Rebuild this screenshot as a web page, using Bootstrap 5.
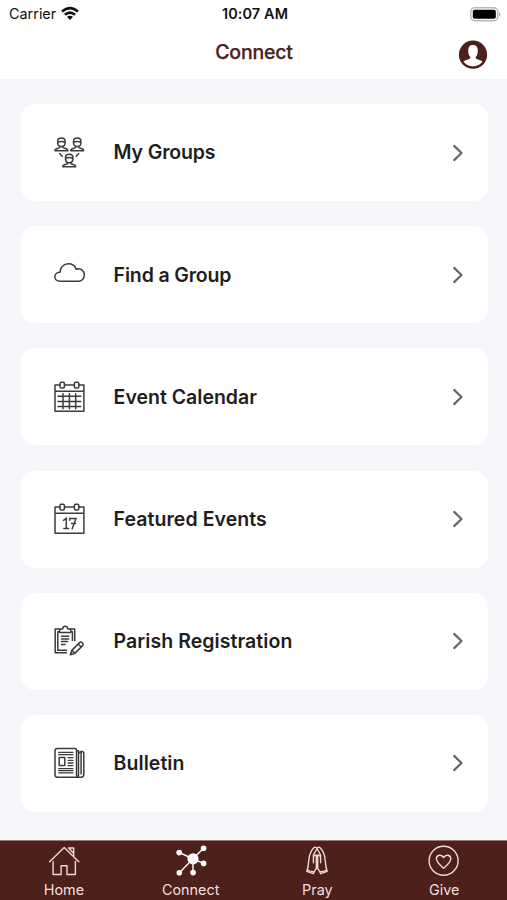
<!DOCTYPE html>
<html lang="en">
<head>
<meta charset="utf-8">
<meta name="viewport" content="width=device-width, initial-scale=1">
<title>Connect</title>
<link href="https://cdn.jsdelivr.net/npm/bootstrap@5.3.0/dist/css/bootstrap.min.css" rel="stylesheet">
<style>
body{font-family:Inter,"Liberation Sans",sans-serif;background:#f4f6fa;color:#1e1e20;height:100vh}
svg{display:block;flex:none;fill:none;stroke-linecap:round;stroke-linejoin:round}
.top-area{height:79px}
.status-row{height:28px;font-size:14.4px;padding:0 6px 0 9px;color:#111}
.status-row>div{flex:1 1 0}
.status-time{font-weight:600;font-size:14.4px;letter-spacing:.13px}
.title-row{height:51px;padding:0 19px 0 20px}
.page-title{font-size:19.5px;font-weight:500;letter-spacing:-.2px;color:#4b201d;line-height:24px;padding-bottom:3px;-webkit-text-stroke:.25px #4b201d}
.menu-list{padding:25px 19px 0 21px;gap:25.2px}
.menu-card{height:97px;border:0;border-radius:14px;padding:0 24px 0 23px;color:inherit}
.menu-card svg{stroke:#3c3c3c;stroke-width:1.5}
.menu-label{font-size:19.5px;font-weight:600;margin-left:19.6px;padding-top:1px}
.label-snug{letter-spacing:-.15px}
.label-wide{letter-spacing:.06px}
.menu-card .chevron{stroke:#666;stroke-width:2.2}
.tab-row{height:60px;background:#4d201c;border-top:1px solid #957d76}
.tab-row a{color:#f3dfda;font-size:14.4px;line-height:18px;padding:2px 0 0 1px}
.tab-row span{padding-top:1px}
.tab-row svg{stroke:#f0d9d3;stroke-width:1.4}
</style>
</head>
<body class="d-flex flex-column overflow-hidden">
<header class="top-area bg-white">
  <div class="status-row d-flex align-items-center">
    <div class="d-flex align-items-center gap-1"><span>Carrier</span>
      <svg width="20" height="16" viewBox="0 0 20 16" stroke="#111" stroke-width="2.7"><path d="M2 5.6Q10-1.4 18 5.6M4.9 8.8Q10 4.4 15.1 8.8" stroke-linecap="butt"/><path d="M7 10.8Q10 8.5 13 10.8L10 14z" fill="#111" stroke="none"/></svg>
    </div>
    <span class="status-time">10:07 AM</span>
    <div class="d-flex justify-content-end">
      <svg width="31" height="15" viewBox="0 0 31 15"><rect x=".8" y=".8" width="27" height="13" rx="4" fill="#fff" stroke="#b7b7b7" stroke-width="1.4"/><rect x="2.8" y="2.8" width="23" height="9" rx="1.8" fill="#000"/><path d="M29 5q3 2.4 0 4.8z" fill="#aaa"/></svg>
    </div>
  </div>
  <div class="title-row d-flex align-items-center justify-content-between">
    <span style="width:30px"></span>
    <h1 class="page-title m-0">Connect</h1>
    <svg width="30" height="30" viewBox="0 0 30 30"><circle cx="15" cy="15.7" r="14.1" fill="#4d201c"/><path d="M5.5 22.8C7 20.7 12.3 20.8 12.5 18.5C10.6 16 10.2 14.5 10.2 11.3C10.2 7.8 12 6 15 6S19.8 7.8 19.8 11.3C19.8 14.5 19.4 16 17.5 18.5C17.7 20.8 23 20.7 24.5 22.8Q20.5 27.4 15 27.4T5.5 22.8" fill="#fff"/></svg>
  </div>
</header>

<main class="menu-list d-flex flex-column flex-grow-1">
  <a href="#" class="menu-card card flex-row align-items-center text-decoration-none">
    <svg width="50" height="50" viewBox="0 0 50 50">
      <defs><g id="member"><path d="M-3.7-9.2C-3.7-13.8 3.7-13.8 3.7-9.2V-7.4C3.3-3 -3.3-3-3.7-7.4zM-3.7-8.3Q0-10.3 3.7-8.3M-1.6-4.6V-3.2C-2-2.3-6.5-2.6-6.5 0H6.5C6.5-2.6 2-2.3 1.6-3.2V-4.6"/></g></defs>
      <use href="#member" x="17.4" y="22.7"/><use href="#member" x="33.2" y="22.7"/><use href="#member" x="25.2" y="38.8"/>
      <path d="M15.7 25.5l2.6 2.7M34.8 25.5l-2.6 2.7"/>
    </svg>
    <span class="menu-label label-snug">My Groups</span><svg class="chevron ms-auto" width="12" height="18" viewBox="0 0 12 18"><path d="M2.2 1.9L9.5 9 2.2 16.1"/></svg>
  </a>
  <a href="#" class="menu-card card flex-row align-items-center text-decoration-none">
    <svg width="50" height="50" viewBox="0 0 50 50"><path d="M16 31.3C13 31.3 10.8 29.3 10.8 26.8C10.8 24.1 13 22.2 16.1 22.2C16.2 17.5 19.5 13.8 24.3 13.8C28.7 13.8 31.2 16.3 32.2 19.2C36.6 17.7 40.3 20.8 40.3 24.8C40.3 28.5 37.6 31.3 34.4 31.3z"/></svg>
    <span class="menu-label label-snug">Find a Group</span><svg class="chevron ms-auto" width="12" height="18" viewBox="0 0 12 18"><path d="M2.2 1.9L9.5 9 2.2 16.1"/></svg>
  </a>
  <a href="#" class="menu-card card flex-row align-items-center text-decoration-none">
    <svg width="50" height="50" viewBox="0 0 50 50"><path d="M16 13H11V39.2H39.9V13H35M20.5 13h9.8M11 19.3H39.9"/><rect x="16" y="10.3" width="4.4" height="5.6" rx="1.2"/><rect x="30.4" y="10.3" width="4.4" height="5.6" rx="1.2"/><path d="M14 24.2H36.8M14 29.5H36.8M14 34.5H36.8M19 21.7V36.7M25.4 21.7V36.7M31.7 21.7V36.7"/></svg>
    <span class="menu-label">Event Calendar</span><svg class="chevron ms-auto" width="12" height="18" viewBox="0 0 12 18"><path d="M2.2 1.9L9.5 9 2.2 16.1"/></svg>
  </a>
  <a href="#" class="menu-card card flex-row align-items-center text-decoration-none">
    <svg width="50" height="50" viewBox="0 0 50 50"><path d="M16 13H11V39.2H39.9V13H35M20.5 13h9.8M11 19.3H39.9"/><rect x="16" y="10.3" width="4.4" height="5.6" rx="1.2"/><rect x="30.4" y="10.3" width="4.4" height="5.6" rx="1.2"/><path stroke-linejoin="miter" d="M19.6 26.3L22.3 24.2V34.4M19.8 34.6H24.6M25.6 26.3V24.5H32L28.2 34.8M27.5 29.5H31.5"/></svg>
    <span class="menu-label label-wide">Featured Events</span><svg class="chevron ms-auto" width="12" height="18" viewBox="0 0 12 18"><path d="M2.2 1.9L9.5 9 2.2 16.1"/></svg>
  </a>
  <a href="#" class="menu-card card flex-row align-items-center text-decoration-none">
    <svg width="50" height="50" viewBox="0 0 50 50"><path d="M16 13H11.2V36.7H22.4M26.5 13H30.7V24.5M15.2 15.8H13.8V34.2H22.4M27.6 15.8H28.4V24.5"/><path d="M15.6 16.4V13.5L18.6 12.8Q19 10.3 21.2 10.3T23.8 12.8L26.8 13.5V16.4z"/><path d="M17.5 20.3H24.7M17.5 23H24.7M17.5 25.6H23.5M17.5 28.4H21"/><path d="M26.3 38.8L27.8 34.4L35.5 26.6Q37 25.4 38.4 26.8T38.6 29.6L30.8 37.4zM27.8 34.4L30.8 37.4M34.1 28L37.2 31"/></svg>
    <span class="menu-label label-wide">Parish Registration</span><svg class="chevron ms-auto" width="12" height="18" viewBox="0 0 12 18"><path d="M2.2 1.9L9.5 9 2.2 16.1"/></svg>
  </a>
  <a href="#" class="menu-card card flex-row align-items-center text-decoration-none">
    <svg width="50" height="50" viewBox="0 0 50 50"><path d="M13.2 10.5H31.2Q32.5 10.5 32.5 12V37Q33 39.2 35 39.2H13.2Q11 39.2 11 36.8V12.8Q11 10.5 13.2 10.5zM32.5 12.7H34.5V37.5M34.7 15.3L37.1 13.4H38Q39.8 13.4 39.8 15.4V36.6Q39.8 39.2 37.2 39.2H35M37.1 14V36"/><rect x="15.2" y="19.4" width="5.6" height="8"/><path stroke-width="1.3" d="M14.7 14.4H29M14.7 16.7H29M24 19.6H29M24 22.3H29M24 25H29M24 27.6H29M14.7 30.6H29M14.7 32.7H29M14.7 34.8H29"/></svg>
    <span class="menu-label label-wide">Bulletin</span><svg class="chevron ms-auto" width="12" height="18" viewBox="0 0 12 18"><path d="M2.2 1.9L9.5 9 2.2 16.1"/></svg>
  </a>
</main>

<nav class="tab-row d-flex flex-shrink-0">
  <a href="#" class="col-3 d-flex flex-column align-items-center text-decoration-none">
    <svg width="36" height="37" viewBox="0 0 36 37" stroke-linejoin="miter"><path d="M3.6 18.8L18.2 4.4 32.8 18.8M7.1 18.5V31.5H15.1V22.8H21V31.5H29.4V18.5M22.6 5H27.7V13.7M22.6 5L27.4 10"/></svg><span>Home</span>
  </a>
  <a href="#" class="col-3 d-flex flex-column align-items-center text-decoration-none">
    <svg width="36" height="37" viewBox="0 0 36 37" style="stroke:#fff"><path d="M20 15.8L6.2 9.5M20 15.8L30.5 5.3M20 15.8L30.5 20.3M20 15.8L6.4 29.8M20 15.8V29.5"/><g fill="#fff" stroke="none"><circle cx="20" cy="15.8" r="5.6"/><circle cx="6.2" cy="9.6" r="2.8"/><circle cx="30.6" cy="5.3" r="2.8"/><circle cx="30.6" cy="20.4" r="2.8"/><circle cx="6.3" cy="29.8" r="2.8"/><circle cx="20.1" cy="29.6" r="2.8"/></g></svg><span>Connect</span>
  </a>
  <a href="#" class="col-3 d-flex flex-column align-items-center text-decoration-none">
    <svg width="36" height="37" viewBox="0 0 36 37"><path d="M18 5.3Q16.2 3 14.4 5.2C11.3 8.5 10 13 9.7 18C9.5 22 9 25 7.8 28.4L14.3 30.7L16.5 26.5Q17.3 25.4 18 25.4T19.5 26.5L21.7 30.7L28.2 28.4C27 25 26.5 22 26.3 18C26 13 24.7 8.5 21.6 5.2Q19.8 3 18 5.3zM18 5.5L14.4 12V19.7M18 5.5L21.6 12V19.7M14.4 14.3Q16 10.7 18 12.8Q20 10.7 21.6 14.3M17.3 13.3V25M18.7 13.3V25M8.3 26.7Q11 28.7 15 28.7M27.7 26.7Q25 28.7 21 28.7"/></svg><span>Pray</span>
  </a>
  <a href="#" class="col-3 d-flex flex-column align-items-center text-decoration-none">
    <svg width="36" height="37" viewBox="0 0 36 37"><circle cx="17.6" cy="17.7" r="14.5"/><path d="M17.6 25.3C13.9 22 10.4 19.2 10.4 15.8C10.4 11.7 15.6 10.9 17.6 14.6C19.6 10.9 24.8 11.7 24.8 15.8C24.8 19.2 21.3 22 17.6 25.3z"/></svg><span>Give</span>
  </a>
</nav>
<script src="https://cdn.jsdelivr.net/npm/bootstrap@5.3.0/dist/js/bootstrap.bundle.min.js"></script>
</body>
</html>
